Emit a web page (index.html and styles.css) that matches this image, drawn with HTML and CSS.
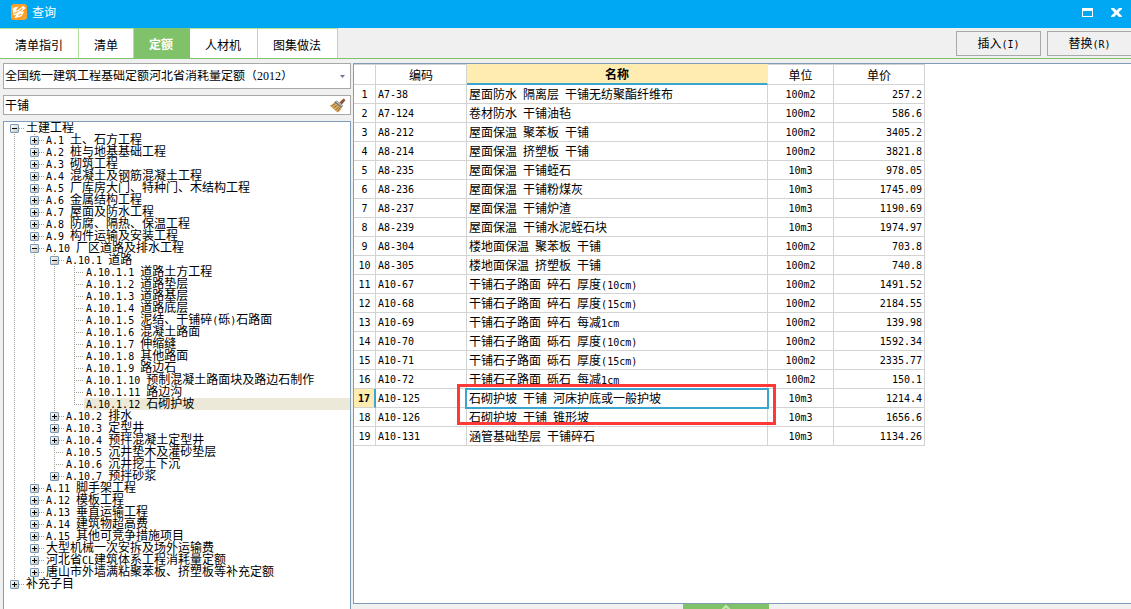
FILE: index.html
```html
<!DOCTYPE html>
<html lang="zh-CN">
<head>
<meta charset="utf-8">
<title>查询</title>
<link rel="stylesheet" href="styles.css">
</head>
<body>
<header class="titlebar">
  <svg class="logo" viewBox="0 0 16 16" aria-hidden="true"><rect width="16" height="16" rx="3" fill="#f9a12a"/><path d="M2 4.500L6.500 3 3.500 7.500 7 6.500 12 2.500 14 4 9 8.500 12.500 8 10 12 4 13.500 7 9.500 3 11z" fill="#fff" stroke="#fff" stroke-width="1" stroke-linejoin="round"/><path d="M3 9.500l4.500-2M8.500 7l3-2.500M7.500 11.500l2.500-1.500" fill="none" stroke="#f9a12a" stroke-width="1.200"/></svg>
  <h1 class="title">查询</h1>
  <button class="winbtn" type="button" aria-label="最大化"><svg viewBox="0 0 11 9"><path d="M0 0h11v9H0zM1 3v5h9V3z" fill="#fff" fill-rule="evenodd"/></svg></button>
  <button class="winbtn" type="button" aria-label="关闭"><svg viewBox="0 0 11 9"><path d="M0 0h3l2.500 2.500L8 0h3v1L7.500 4.500 11 8v1H8L5.500 6.500 3 9H0V8l3.500-3.500L0 1z" fill="#fff"/></svg></button>
</header>
<div class="toolbar">
  <nav class="tabs">
    <button class="tab" type="button">清单指引</button>
    <button class="tab" type="button">清单</button>
    <button class="tab active" type="button">定额</button>
    <button class="tab" type="button">人材机</button>
    <button class="tab" type="button">图集做法</button>
  </nav>
  <div class="actions">
    <button class="action" type="button">插入<span class="n">(I)</span></button>
    <button class="action" type="button">替换<span class="n">(R)</span></button>
  </div>
</div>
<main class="main">
  <aside class="side">
    <div class="combo">
      <select class="library" aria-label="定额库"><option>全国统一建筑工程基础定额河北省消耗量定额（2012）</option></select>
      <svg class="arrow" viewBox="0 0 5 3" aria-hidden="true"><path d="M0 0h5L2.500 3z" fill="#6c7a8c"/></svg>
    </div>
    <div class="search">
      <input class="query" type="text" value="干铺" aria-label="搜索">
      <button class="clear" type="button" aria-label="清除"><svg viewBox="0 0 17 15"><path d="M10.500 4.500L14.500.5 16.500 2 13 6.500z" fill="#8b5430"/><path d="M7.500 2.500l6.500 5-1.500 2.500L5 4.500z" fill="#77736a"/><path d="M5 4.500L12.500 10C12 12 10.500 13.500 8.500 14.500L.5 7.500C2.500 7 4 6 5 4.500z" fill="#d9ac62"/><path d="M2.500 8L6.500 5.500M4.500 10l4-3M6.500 12l4-3.500M8.500 13.500l3-4" stroke="#94682c" stroke-width="1" fill="none"/><path d="M7 3.500l6 4.500" stroke="#dedbd2" stroke-width="1"/></svg></button>
    </div>
    <div class="treebox">
      <ul class="tree">
        <li><div class="row"><button class="tg open" type="button" aria-label="折叠"></button><span class="label">土建工程</span></div>
          <ul>
            <li><div class="row"><button class="tg" type="button" aria-label="展开"></button><span class="label"><span class="n">A.1 </span>土、石方工程</span></div></li>
            <li><div class="row"><button class="tg" type="button" aria-label="展开"></button><span class="label"><span class="n">A.2 </span>桩与地基基础工程</span></div></li>
            <li><div class="row"><button class="tg" type="button" aria-label="展开"></button><span class="label"><span class="n">A.3 </span>砌筑工程</span></div></li>
            <li><div class="row"><button class="tg" type="button" aria-label="展开"></button><span class="label"><span class="n">A.4 </span>混凝土及钢筋混凝土工程</span></div></li>
            <li><div class="row"><button class="tg" type="button" aria-label="展开"></button><span class="label"><span class="n">A.5 </span>厂库房大门、特种门、木结构工程</span></div></li>
            <li><div class="row"><button class="tg" type="button" aria-label="展开"></button><span class="label"><span class="n">A.6 </span>金属结构工程</span></div></li>
            <li><div class="row"><button class="tg" type="button" aria-label="展开"></button><span class="label"><span class="n">A.7 </span>屋面及防水工程</span></div></li>
            <li><div class="row"><button class="tg" type="button" aria-label="展开"></button><span class="label"><span class="n">A.8 </span>防腐、隔热、保温工程</span></div></li>
            <li><div class="row"><button class="tg" type="button" aria-label="展开"></button><span class="label"><span class="n">A.9 </span>构件运输及安装工程</span></div></li>
            <li><div class="row"><button class="tg open" type="button" aria-label="折叠"></button><span class="label"><span class="n">A.10 </span>厂区道路及排水工程</span></div>
              <ul>
                <li><div class="row"><button class="tg open" type="button" aria-label="折叠"></button><span class="label"><span class="n">A.10.1 </span>道路</span></div>
                  <ul>
                    <li><div class="row leaf"><span class="label"><span class="n">A.10.1.1 </span>道路土方工程</span></div></li>
                    <li><div class="row leaf"><span class="label"><span class="n">A.10.1.2 </span>道路垫层</span></div></li>
                    <li><div class="row leaf"><span class="label"><span class="n">A.10.1.3 </span>道路基层</span></div></li>
                    <li><div class="row leaf"><span class="label"><span class="n">A.10.1.4 </span>道路底层</span></div></li>
                    <li><div class="row leaf"><span class="label"><span class="n">A.10.1.5 </span>泥结、干铺碎<span class="n">(</span>砾<span class="n">)</span>石路面</span></div></li>
                    <li><div class="row leaf"><span class="label"><span class="n">A.10.1.6 </span>混凝土路面</span></div></li>
                    <li><div class="row leaf"><span class="label"><span class="n">A.10.1.7 </span>伸缩缝</span></div></li>
                    <li><div class="row leaf"><span class="label"><span class="n">A.10.1.8 </span>其他路面</span></div></li>
                    <li><div class="row leaf"><span class="label"><span class="n">A.10.1.9 </span>路边石</span></div></li>
                    <li><div class="row leaf"><span class="label"><span class="n">A.10.1.10 </span>预制混凝土路面块及路边石制作</span></div></li>
                    <li><div class="row leaf"><span class="label"><span class="n">A.10.1.11 </span>路边沟</span></div></li>
                    <li><div class="row leaf"><span class="label selected"><span class="n">A.10.1.12 </span>石砌护坡</span></div></li>
                  </ul>
                </li>
                <li><div class="row"><button class="tg" type="button" aria-label="展开"></button><span class="label"><span class="n">A.10.2 </span>排水</span></div></li>
                <li><div class="row"><button class="tg" type="button" aria-label="展开"></button><span class="label"><span class="n">A.10.3 </span>定型井</span></div></li>
                <li><div class="row"><button class="tg" type="button" aria-label="展开"></button><span class="label"><span class="n">A.10.4 </span>预拌混凝土定型井</span></div></li>
                <li><div class="row leaf"><span class="label"><span class="n">A.10.5 </span>沉井垫木及灌砂垫层</span></div></li>
                <li><div class="row leaf"><span class="label"><span class="n">A.10.6 </span>沉井挖土下沉</span></div></li>
                <li><div class="row"><button class="tg" type="button" aria-label="展开"></button><span class="label"><span class="n">A.10.7 </span>预拌砂浆</span></div></li>
              </ul>
            </li>
            <li><div class="row"><button class="tg" type="button" aria-label="展开"></button><span class="label"><span class="n">A.11 </span>脚手架工程</span></div></li>
            <li><div class="row"><button class="tg" type="button" aria-label="展开"></button><span class="label"><span class="n">A.12 </span>模板工程</span></div></li>
            <li><div class="row"><button class="tg" type="button" aria-label="展开"></button><span class="label"><span class="n">A.13 </span>垂直运输工程</span></div></li>
            <li><div class="row"><button class="tg" type="button" aria-label="展开"></button><span class="label"><span class="n">A.14 </span>建筑物超高费</span></div></li>
            <li><div class="row"><button class="tg" type="button" aria-label="展开"></button><span class="label"><span class="n">A.15 </span>其他可竞争措施项目</span></div></li>
            <li><div class="row"><button class="tg" type="button" aria-label="展开"></button><span class="label">大型机械一次安拆及场外运输费</span></div></li>
            <li><div class="row"><button class="tg" type="button" aria-label="展开"></button><span class="label">河北省<span class="n">CL</span>建筑体系工程消耗量定额</span></div></li>
            <li><div class="row"><button class="tg" type="button" aria-label="展开"></button><span class="label">唐山市外墙满粘聚苯板、挤塑板等补充定额</span></div></li>
          </ul>
        </li>
        <li><div class="row"><button class="tg" type="button" aria-label="展开"></button><span class="label">补充子目</span></div></li>
      </ul>
    </div>
  </aside>
  <section class="content">
    <div class="gridbox">
      <table class="grid">
        <colgroup><col class="c-no"><col class="c-code"><col class="c-name"><col class="c-unit"><col class="c-price"></colgroup>
        <thead><tr><th></th><th>编码</th><th class="sorted">名称</th><th>单位</th><th>单价</th></tr></thead>
        <tbody>
          <tr><td>1</td><td>A7-38</td><td>屋面防水<span class="n"> </span>隔离层<span class="n"> </span>干铺无纺聚酯纤维布</td><td>100m2</td><td>257.2</td></tr>
          <tr><td>2</td><td>A7-124</td><td>卷材防水<span class="n"> </span>干铺油毡</td><td>100m2</td><td>586.6</td></tr>
          <tr><td>3</td><td>A8-212</td><td>屋面保温<span class="n"> </span>聚苯板<span class="n"> </span>干铺</td><td>100m2</td><td>3405.2</td></tr>
          <tr><td>4</td><td>A8-214</td><td>屋面保温<span class="n"> </span>挤塑板<span class="n"> </span>干铺</td><td>100m2</td><td>3821.8</td></tr>
          <tr><td>5</td><td>A8-235</td><td>屋面保温<span class="n"> </span>干铺蛭石</td><td>10m3</td><td>978.05</td></tr>
          <tr><td>6</td><td>A8-236</td><td>屋面保温<span class="n"> </span>干铺粉煤灰</td><td>10m3</td><td>1745.09</td></tr>
          <tr><td>7</td><td>A8-237</td><td>屋面保温<span class="n"> </span>干铺炉渣</td><td>10m3</td><td>1190.69</td></tr>
          <tr><td>8</td><td>A8-239</td><td>屋面保温<span class="n"> </span>干铺水泥蛭石块</td><td>10m3</td><td>1974.97</td></tr>
          <tr><td>9</td><td>A8-304</td><td>楼地面保温<span class="n"> </span>聚苯板<span class="n"> </span>干铺</td><td>100m2</td><td>703.8</td></tr>
          <tr><td>10</td><td>A8-305</td><td>楼地面保温<span class="n"> </span>挤塑板<span class="n"> </span>干铺</td><td>100m2</td><td>740.8</td></tr>
          <tr><td>11</td><td>A10-67</td><td>干铺石子路面<span class="n"> </span>碎石<span class="n"> </span>厚度<span class="n">(10cm)</span></td><td>100m2</td><td>1491.52</td></tr>
          <tr><td>12</td><td>A10-68</td><td>干铺石子路面<span class="n"> </span>碎石<span class="n"> </span>厚度<span class="n">(15cm)</span></td><td>100m2</td><td>2184.55</td></tr>
          <tr><td>13</td><td>A10-69</td><td>干铺石子路面<span class="n"> </span>碎石<span class="n"> </span>每减<span class="n">1cm</span></td><td>100m2</td><td>139.98</td></tr>
          <tr><td>14</td><td>A10-70</td><td>干铺石子路面<span class="n"> </span>砾石<span class="n"> </span>厚度<span class="n">(10cm)</span></td><td>100m2</td><td>1592.34</td></tr>
          <tr><td>15</td><td>A10-71</td><td>干铺石子路面<span class="n"> </span>砾石<span class="n"> </span>厚度<span class="n">(15cm)</span></td><td>100m2</td><td>2335.77</td></tr>
          <tr><td>16</td><td>A10-72</td><td>干铺石子路面<span class="n"> </span>砾石<span class="n"> </span>每减<span class="n">1cm</span></td><td>100m2</td><td>150.1</td></tr>
          <tr class="current"><td>17</td><td>A10-125</td><td>石砌护坡<span class="n"> </span>干铺<span class="n"> </span>河床护底或一般护坡<span class="mark"></span></td><td>10m3</td><td>1214.4</td></tr>
          <tr><td>18</td><td>A10-126</td><td>石砌护坡<span class="n"> </span>干铺<span class="n"> </span>锥形坡</td><td>10m3</td><td>1656.6</td></tr>
          <tr><td>19</td><td>A10-131</td><td>涵管基础垫层<span class="n"> </span>干铺碎石</td><td>10m3</td><td>1134.26</td></tr>
        </tbody>
      </table>
    </div>
    <footer class="dock"><button class="handle" type="button" aria-label="展开面板"><svg viewBox="0 0 10 10"><path d="M1 5l4-4 4 4M2 9l3-4 3 4" fill="none" stroke="#c5e8b5" stroke-width="2"/></svg></button></footer>
  </section>
</main>
</body>
</html>
```
FILE: styles.css
```css
* { box-sizing: border-box; }
body {
  margin: 0;
  height: 100vh;
  overflow: hidden;
  display: flex;
  flex-direction: column;
  background: #f0f0f0;
  color: #000;
  font: 12px/12px "Noto Sans CJK SC", sans-serif;
}
button, input, select { font: inherit; color: inherit; margin: 0; padding: 0; border: 0; border-radius: 0; background: none; }
button svg { display: block; }
.n { font-family: "DejaVu Sans Mono", monospace; font-size: 10px; white-space: pre; }

.titlebar { flex: none; display: flex; align-items: center; height: 28px; padding: 0 9px 4px 11px; background: #00a8f3; }
.logo { width: 16px; height: 16px; }
.title { flex: 1; margin: 0 0 0 5px; font-size: 12px; font-weight: 400; color: #fff; }
.winbtn { margin-left: 18px; }
.winbtn svg { width: 11px; height: 9px; }

.toolbar { flex: none; display: flex; justify-content: space-between; height: 31px; border-bottom: 1px solid #80c269; }
.tabs { display: flex; }
.tab { padding: 3px 15px 0; background: #fff; border-top: 1px solid #aee29a; border-right: 1px solid #aee29a; }
.tab:nth-child(n+3) { padding-right: 16px; }
.tab.active { padding-top: 1px; background: #80c269; border-color: #80c269; color: #fff; font-weight: 700; }
.actions { display: flex; gap: 6px; padding: 3px 0 2px; margin-right: -1px; }
.action { width: 85px; border: 1px solid #a8a8a8; }

.main { flex: 1; min-height: 0; display: flex; gap: 2px; padding: 4px 0 0 3px; }
.side { width: 348px; flex: none; display: flex; flex-direction: column; gap: 6px; }
.combo, .search { flex: none; display: flex; align-items: center; background: #fff; border: 1px solid #a8a8a8; padding: 0 4px 0 1px; }
.combo { height: 26px; padding-right: 5px; }
.search { height: 20px; }
.library { flex: 1; height: 24px; appearance: none; outline: 0; font-family: "Liberation Serif", "Noto Sans CJK SC", serif; }
.arrow { width: 5px; height: 3px; }
.query { flex: 1; min-width: 0; height: 18px; padding-bottom: 1px; outline: 0; }
.clear svg { width: 17px; height: 15px; }

.treebox { flex: 1; min-height: 0; overflow: hidden; background: #fff; border: 1px solid #7f9db9; border-bottom: 0; padding-left: 6px; }
.treebox ul { list-style: none; margin: 0; padding: 0; }
.treebox ul ul { padding-left: 20px; }
.treebox li { background: repeating-linear-gradient(#a0a094 0 1px, transparent 1px 2px) 4px 0 / 1px 100% no-repeat; }
.treebox li:last-child { background-size: 1px 6px; }
.tree > li:first-child { background-position: 4px 6px; }
.row { display: flex; align-items: center; height: 12px; }
.row::before {
  content: "";
  order: 1;
  width: 5px;
  height: 1px;
  background: repeating-linear-gradient(90deg, #a0a094 0 1px, transparent 1px 2px);
}
.row.leaf::before { width: 10px; margin-left: 4px; }
.label { order: 2; flex: 1; height: 12px; padding-left: 2px; line-height: 10px; white-space: nowrap; }
.label.selected { background: #ece9d8; }
.tg {
  width: 9px;
  height: 9px;
  border: 1px solid #7898b5;
  border-radius: 1px;
  background:
    linear-gradient(#000, #000) center / 5px 1px no-repeat,
    linear-gradient(#000, #000) center / 1px 5px no-repeat,
    linear-gradient(135deg, #fff, #c9c3b4);
}
.tg.open { background: linear-gradient(#000, #000) center / 5px 1px no-repeat, linear-gradient(135deg, #fff, #c9c3b4); }

.content { flex: 1; min-width: 0; display: flex; flex-direction: column; }
.gridbox { flex: 1; min-height: 0; background: #fff; border: 1px solid #7f9db9; border-right: 0; }
.grid { width: 571px; table-layout: fixed; border-collapse: separate; border-spacing: 0; }
.c-no { width: 22px; }
.c-code { width: 91px; }
.c-name { width: 301px; }
.c-unit { width: 66px; }
.c-price { width: 91px; }
.grid th, .grid td { padding: 0 2px; border-right: 1px solid #d3d3d3; border-bottom: 1px solid #d3d3d3; white-space: nowrap; }
.grid th { height: 21px; font-weight: 400; border-top: 1px solid #d3d3d3; }
.grid th.sorted { font-weight: 700; background: #ffecb0; border-color: #ffecb0; border-bottom: 2px solid #3ba5cf; }
.grid td { height: 19px; padding-top: 2px; text-align: center; font-family: "DejaVu Sans Mono", monospace; font-size: 10px; }
.grid td:nth-child(1) { padding: 2px 0 0; }
.grid td:nth-child(2) { text-align: left; }
.grid td:nth-child(3) { text-align: left; font-family: "Noto Sans CJK SC", sans-serif; font-size: 12px; }
.grid td:nth-child(5) { text-align: right; }
.grid .current td:nth-child(1) { background: #ffecb0; border-right: 2px solid #3ba5cf; font-weight: 700; }
.grid .current td:nth-child(3) { position: relative; }
.grid .current td:nth-child(3)::after { content: ""; position: absolute; inset: -1px -2px -2px; border: 2px solid #3ba5cf; }
.mark { position: absolute; z-index: 1; inset: -5px -9px -18px -10px; border: 3px solid #ff3838; }

.dock { flex: none; display: flex; justify-content: center; height: 5px; padding-right: 32px; overflow: hidden; }
.handle { width: 86px; height: 12px; background: #80c269; }
.handle svg { width: 10px; height: 10px; margin: 0 auto; }
```
